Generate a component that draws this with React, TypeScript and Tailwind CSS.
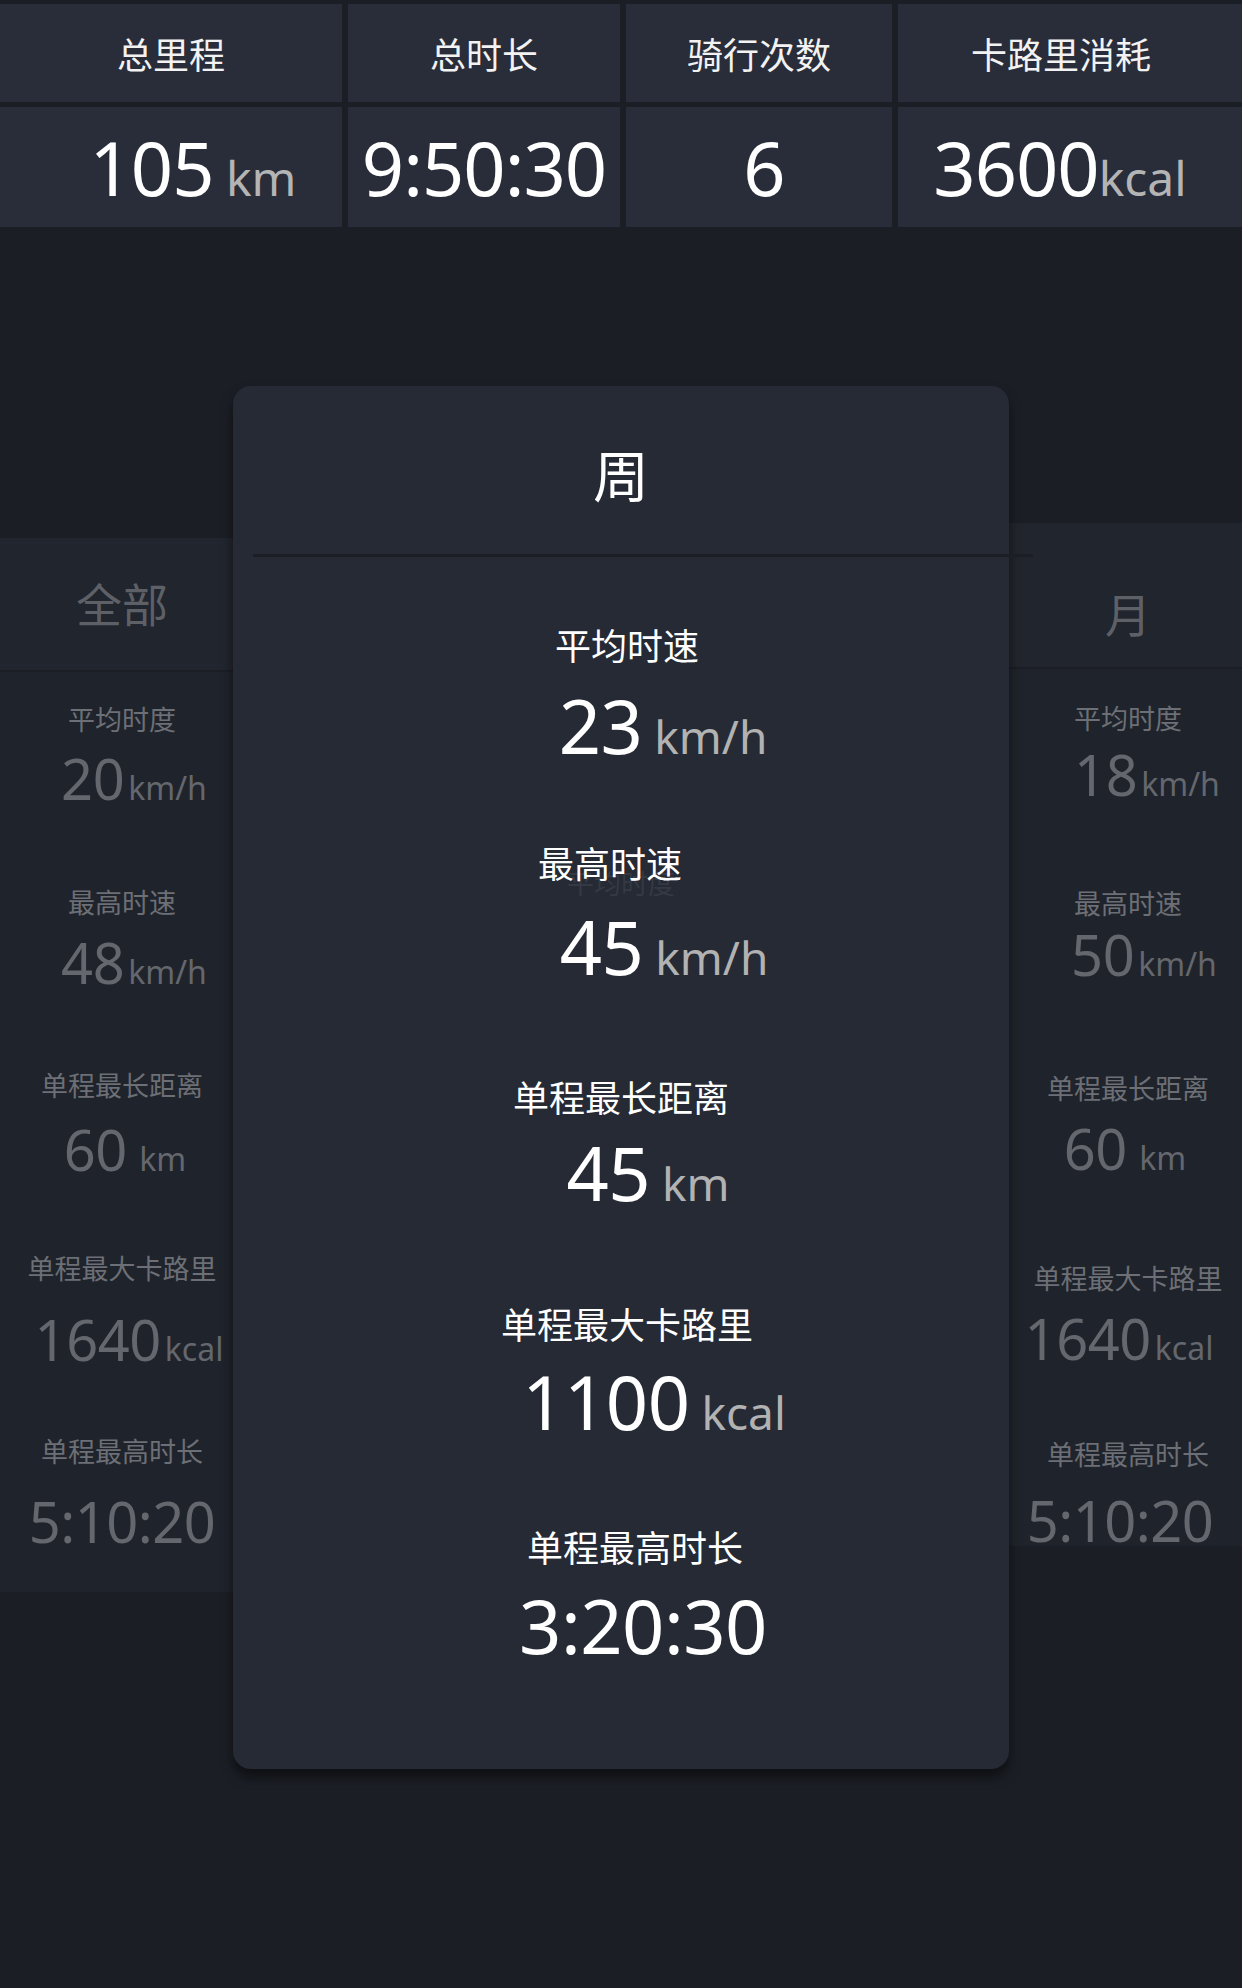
import React from "react";

const totals = [
  { label: "总里程", value: "105", unit: " km", pad: "pl-[44px]", lpad: "" },
  { label: "总时长", value: "9:50:30", unit: "", pad: "", lpad: "" },
  { label: "骑行次数", value: "6", unit: "", pad: "pl-[10px]", lpad: "" },
  { label: "卡路里消耗", value: "3600", unit: "kcal", pad: "pr-[20px]", lpad: "pr-[18px]" },
];

// front card rows, margins read off the screenshot
const weekRows = [
  { label: "平均时速", value: "23", unit: " km/h", lmt: "mt-[72px]", vmt: "mt-[24px]", lpad: "pl-[12px]", vpad: "pl-[84px]" },
  { label: "最高时速", value: "45", unit: " km/h", lmt: "mt-[84px]", vmt: "mt-[27px]", lpad: "pr-[22px]", vpad: "pl-[86px]" },
  { label: "单程最长距离", value: "45", unit: " km", lmt: "mt-[97px]", vmt: "mt-[19px]", lpad: "", vpad: "pl-[54px]" },
  { label: "单程最大卡路里", value: "1100", unit: " kcal", lmt: "mt-[98px]", vmt: "mt-[21px]", lpad: "pl-[12px]", vpad: "pl-[66px]" },
  { label: "单程最高时长", value: "3:20:30", unit: "", lmt: "mt-[92px]", vmt: "mt-[22px]", lpad: "pl-[28px]", vpad: "pl-[44px]" },
];

type Row = { label: string; value: string; unit: string; lmt: string; vmt: string; vpad: string };

const allRows: Row[] = [
  { label: "平均时度", value: "20", unit: "km/h", lmt: "", vmt: "mt-[17px]", vpad: "pl-[24px]" },
  { label: "最高时速", value: "48", unit: "km/h", lmt: "", vmt: "mt-[18px]", vpad: "pl-[24px]" },
  { label: "单程最长距离", value: "60", unit: " km", lmt: "", vmt: "mt-[22px]", vpad: "pl-[6px]" },
  { label: "单程最大卡路里", value: "1640", unit: "kcal", lmt: "", vmt: "mt-[29px]", vpad: "pl-[14px]" },
  { label: "单程最高时长", value: "5:10:20", unit: "", lmt: "", vmt: "mt-[28px]", vpad: "" },
];

const monthRows: Row[] = [
  { label: "平均时度", value: "18", unit: "km/h", lmt: "mt-[2px]", vmt: "mt-[14px]", vpad: "pl-[38px]" },
  { label: "最高时速", value: "50", unit: "km/h", lmt: "mt-[4px]", vmt: "mt-[9px]", vpad: "pl-[32px]" },
  { label: "单程最长距离", value: "60", unit: " km", lmt: "mt-[6px]", vmt: "mt-[18px]", vpad: "pr-[6px]" },
  { label: "单程最大卡路里", value: "1640", unit: "kcal", lmt: "mt-[13px]", vmt: "mt-[18px]", vpad: "pr-[18px]" },
  { label: "单程最高时长", value: "5:10:20", unit: "", lmt: "mt-[6px]", vmt: "mt-[24px]", vpad: "pr-[16px]" },
];

const SidePanel = ({
  title,
  rows,
  headerClass,
  className,
}: {
  title: string;
  rows: Row[];
  headerClass: string;
  className: string;
}) => (
  <div className={`absolute w-[562px] overflow-hidden rounded-[16px] bg-[#1f232b] ${className}`}>
    <div
      className={`flex items-center justify-center border-b-2 border-[#1b1e25] bg-[#21252d] text-[46px] leading-none text-[#5d6066] ${headerClass}`}
    >
      {title}
    </div>
    <div className="flex flex-col pt-[34px]">
      {rows.map((r) => (
        <div key={r.label} className="flex h-[183px] shrink-0 flex-col items-center">
          <div className={`text-[27px] leading-[27px] text-[#6c6f75] ${r.lmt}`}>{r.label}</div>
          <div className={`flex items-baseline leading-none text-[#64676d] ${r.vmt} ${r.vpad}`}>
            <span className="text-[56px] leading-none tracking-[-0.5px]">{r.value}</span>
            {r.unit && <span className="ml-[4px] text-[32px] leading-none whitespace-pre">{r.unit}</span>}
          </div>
        </div>
      ))}
    </div>
  </div>
);

export default function App() {
  return (
    <div className="min-h-[1988px] w-[1242px] overflow-hidden bg-[#1b1e25] pt-[4px] font-['Noto_Sans','Noto_Sans_CJK_SC',sans-serif] text-white">
      {/* totals table */}
      <div className="grid grid-cols-[342px_272px_266px_1fr] grid-rows-[98px_120px] gap-x-[6px] gap-y-[5px]">
        {totals.map((t) => (
          <div
            key={t.label}
            className={`flex items-center justify-center bg-[#282d39] pt-[6px] text-[36px] leading-none text-[#f2f2f2] ${t.lpad}`}
          >
            {t.label}
          </div>
        ))}
        {totals.map((t) => (
          <div
            key={t.value}
            className={`flex items-baseline justify-center bg-[#282d39] pt-[24px] ${t.pad}`}
          >
            <span className="text-[74px] leading-none tracking-[-1px]">{t.value}</span>
            {t.unit && (
              <span className="text-[48px] leading-none whitespace-pre text-[#b4b4b4]">{t.unit}</span>
            )}
          </div>
        ))}
      </div>

      {/* period carousel */}
      <div className="relative h-[1761px]">
        <SidePanel
          title="全部"
          rows={allRows}
          headerClass="h-[134px]"
          className="left-[-159px] top-[311px] h-[1054px]"
        />
        <SidePanel
          title="月"
          rows={monthRows}
          headerClass="h-[146px] pt-[38px]"
          className="left-[847px] top-[296px] h-[1023px]"
        />

        <div className="absolute left-[233px] top-[159px] h-[1383px] w-[776px] rounded-[18px] bg-[#252a35] shadow-[0_8px_12px_rgba(0,0,0,0.5)]">
          <div className="flex h-[168px] items-center justify-center pt-[10px] text-[56px] leading-none">周</div>
          <div className="ml-[20px] h-[3px] w-[780px] bg-[#1b1e25]" />

          {/* label of the card behind, seen through */}
          <div className="absolute left-0 right-0 top-[484px] text-center text-[27px] leading-[27px] text-[#343943]">
            平均时度
          </div>

          <div className="relative flex flex-col">
            {weekRows.map((r) => (
              <div key={r.label} className="flex flex-col">
                <div className={`flex justify-center text-[36px] leading-[36px] ${r.lmt} ${r.lpad}`}>{r.label}</div>
                <div className={`flex items-baseline justify-center ${r.vmt} ${r.vpad}`}>
                  <span className="text-[74px] leading-none tracking-[-0.5px]">{r.value}</span>
                  {r.unit && (
                    <span className="text-[46px] leading-none whitespace-pre text-[#b2b2b2]">{r.unit}</span>
                  )}
                </div>
              </div>
            ))}
          </div>
        </div>
      </div>
    </div>
  );
}
